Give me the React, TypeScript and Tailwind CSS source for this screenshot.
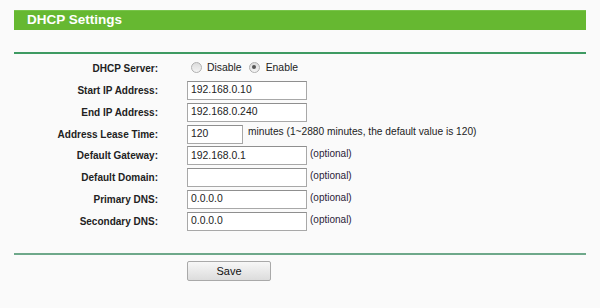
import React from "react";

function Radio({ checked }: { checked?: boolean }) {
  return (
    <span className="relative inline-block w-[11px] h-[11px] rounded-full border border-[#b0b0b0] bg-gradient-to-b from-[#dcdcdc] to-[#f4f4f4]">
      {checked && (
        <span className="absolute left-[2.5px] top-[2.5px] w-[4px] h-[4px] rounded-full bg-[#555]" />
      )}
    </span>
  );
}

function Field({ value, w = "w-[120px]" }: { value: string; w?: string }) {
  return (
    <div
      className={`${w} h-[19px] bg-white border border-[#a8a8a8] border-t-[#8f8f8f] pl-[3px] flex items-center text-[10.4px] text-[#222] leading-none`}
    >
      {value}
    </div>
  );
}

function Row({ label, children }: { label: string; children: React.ReactNode }) {
  return (
    <div className="h-[21.75px] flex items-center">
      <div className="w-[144px] text-right font-bold text-[10px] text-[#222]">{label}</div>
      <div className="ml-[29px] flex items-center">{children}</div>
    </div>
  );
}

function Optional() {
  return <span className="ml-[3px] text-[10px] text-[#2a2238] -mt-[4px]">(optional)</span>;
}

export default function App() {
  return (
    <div className="w-[600px] h-[308px] bg-[#fafafa] pt-[10px] px-[14px] font-['Liberation_Sans',Arial,sans-serif]">
      <div className="h-[20px] bg-[#66b831] border-t border-[#78c44a] pl-[13px] flex items-center text-white font-bold text-[13.5px]">
        DHCP Settings
      </div>
      <div className="mt-[22px] h-[2px] bg-[#3e9a62]" />
      <div className="mt-[4px]">
        <Row label="DHCP Server:">
          <div className="flex items-center text-[10.4px] text-[#222] ml-[4px] -mt-[3px]">
            <Radio />
            <span className="ml-[5px]">Disable</span>
            <span className="ml-[7px] flex items-center"><Radio checked /></span>
            <span className="ml-[6px]">Enable</span>
          </div>
        </Row>
        <Row label="Start IP Address:">
          <Field value="192.168.0.10" />
        </Row>
        <Row label="End IP Address:">
          <Field value="192.168.0.240" />
        </Row>
        <Row label="Address Lease Time:">
          <Field value="120" w="w-[56px]" />
          <span className="ml-[5px] text-[10.2px] text-[#222] -mt-[4px]">
            minutes (1~2880 minutes, the default value is 120)
          </span>
        </Row>
        <Row label="Default Gateway:">
          <Field value="192.168.0.1" />
          <Optional />
        </Row>
        <Row label="Default Domain:">
          <Field value="" />
          <Optional />
        </Row>
        <Row label="Primary DNS:">
          <Field value="0.0.0.0" />
          <Optional />
        </Row>
        <Row label="Secondary DNS:">
          <Field value="0.0.0.0" />
          <Optional />
        </Row>
      </div>
      <div className="mt-[21px] h-[2px] bg-[#6ea88a]" />
      <div className="mt-[6px] ml-[173px] w-[84px] h-[20px] rounded-[2px] border border-[#a9a9a9] bg-gradient-to-b from-[#f7f7f7] to-[#dcdcdc] flex items-center justify-center text-[11px] text-[#111]">
        Save
      </div>
    </div>
  );
}
